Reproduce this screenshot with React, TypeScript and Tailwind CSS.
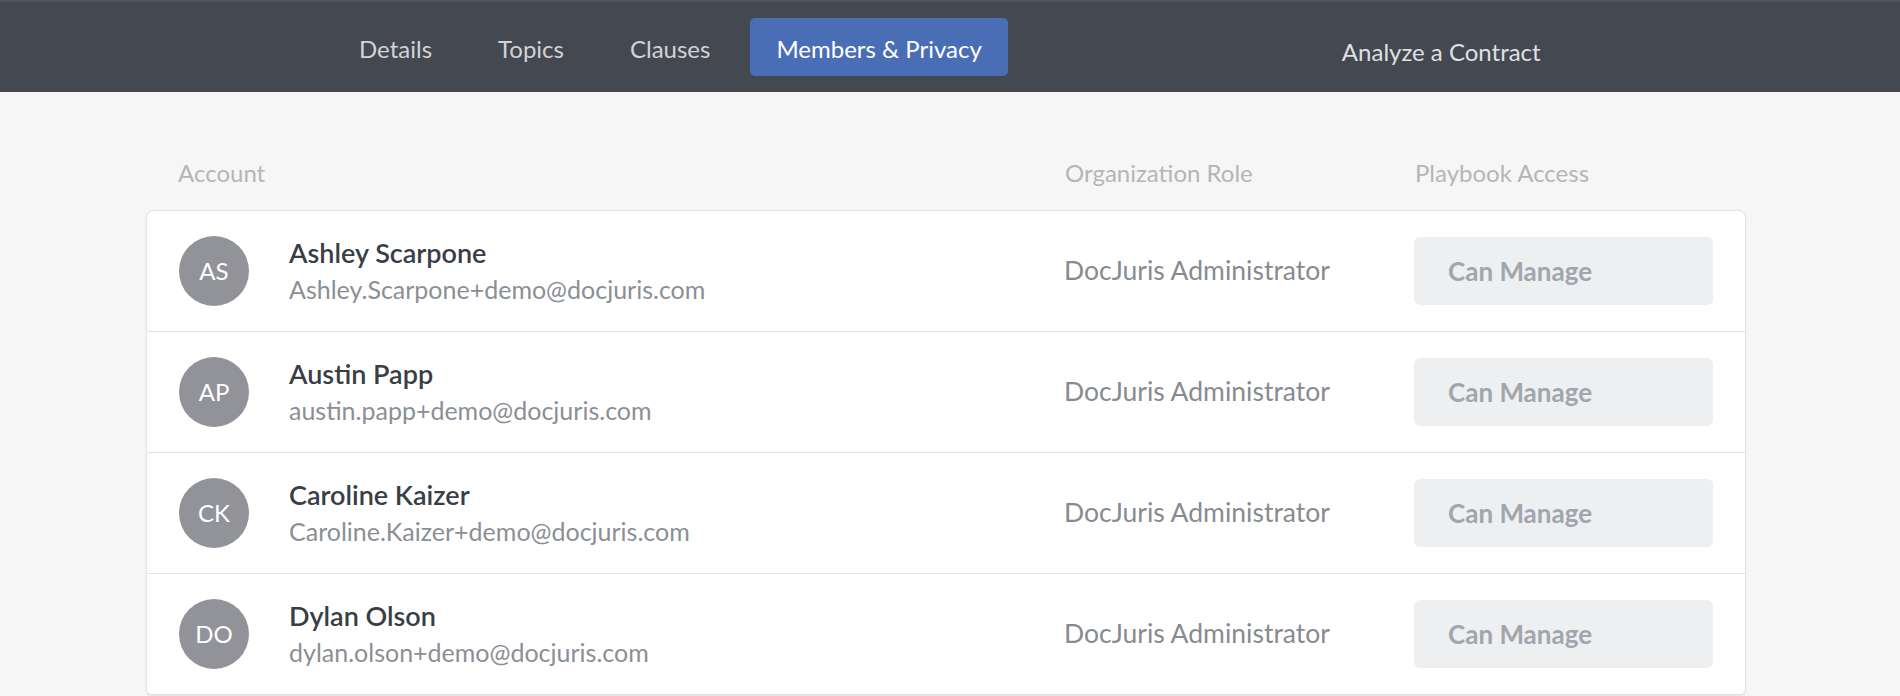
const members = [
  { initials: "AS", name: "Ashley Scarpone", email: "Ashley.Scarpone+demo@docjuris.com" },
  { initials: "AP", name: "Austin Papp", email: "austin.papp+demo@docjuris.com" },
  { initials: "CK", name: "Caroline Kaizer", email: "Caroline.Kaizer+demo@docjuris.com" },
  { initials: "DO", name: "Dylan Olson", email: "dylan.olson+demo@docjuris.com" },
]

const tabs = ["Details", "Topics", "Clauses", "Members & Privacy"]

export default function App() {
  return (
    <div className="min-h-screen bg-[#f6f6f6] font-['Lato','Open_Sans',sans-serif]">
      <header className="h-[92px] bg-[#444851] border-t-2 border-[#50545d] flex">
        <nav className="flex items-start gap-[14px] pl-[333px] pt-[16px]">
          {tabs.map((tab) => (
            <div
              key={tab}
              className={
                tab === "Members & Privacy"
                  ? "h-[58px] px-[26px] pt-[3px] flex items-center rounded-[5px] bg-[#4a6eb6] text-white text-[24px]"
                  : "h-[58px] px-[26px] pt-[3px] flex items-center text-[#d2d3d5] text-[24px]"
              }
            >
              {tab}
            </div>
          ))}
        </nav>
        <div className="ml-[334px] pt-[32px] text-[24px] text-[#dfe0e2]">Analyze a Contract</div>
      </header>

      <main className="ml-[146px] w-[1600px] pt-[66px]">
        <div className="grid grid-cols-[1fr_350px_299px] px-8 text-[24px] leading-[30px] text-[#b2b6ba]">
          <div>Account</div>
          <div>Organization Role</div>
          <div>Playbook Access</div>
        </div>

        <div className="mt-[22px] bg-white border border-[#e4e4e4] rounded-lg shadow-[0_1px_3px_rgba(0,0,0,0.05)]">
          {members.map((m) => (
            <div
              key={m.email}
              className="grid grid-cols-[1fr_350px_299px] items-center h-[121px] pl-8 pr-[32px] border-b border-[#e2e2e2]"
            >
              <div className="flex items-center gap-10">
                <div className="w-[70px] h-[70px] rounded-full bg-[#919399] flex items-center justify-center text-white text-[24px]">
                  {m.initials}
                </div>
                <div className="flex flex-col">
                  <span className="text-[27px] leading-[36px] font-semibold text-[#393e46]">{m.name}</span>
                  <span className="text-[25px] leading-[36px] text-[#8b8f95]">{m.email}</span>
                </div>
              </div>
              <div className="text-[26.5px] text-[#878b91]">DocJuris Administrator</div>
              <div className="h-[68px] rounded-md bg-[#eeeff1] flex items-center pl-[34px] text-[26px] font-bold text-[#a1a6ac]">
                Can Manage
              </div>
            </div>
          ))}
        </div>
      </main>
    </div>
  )
}
